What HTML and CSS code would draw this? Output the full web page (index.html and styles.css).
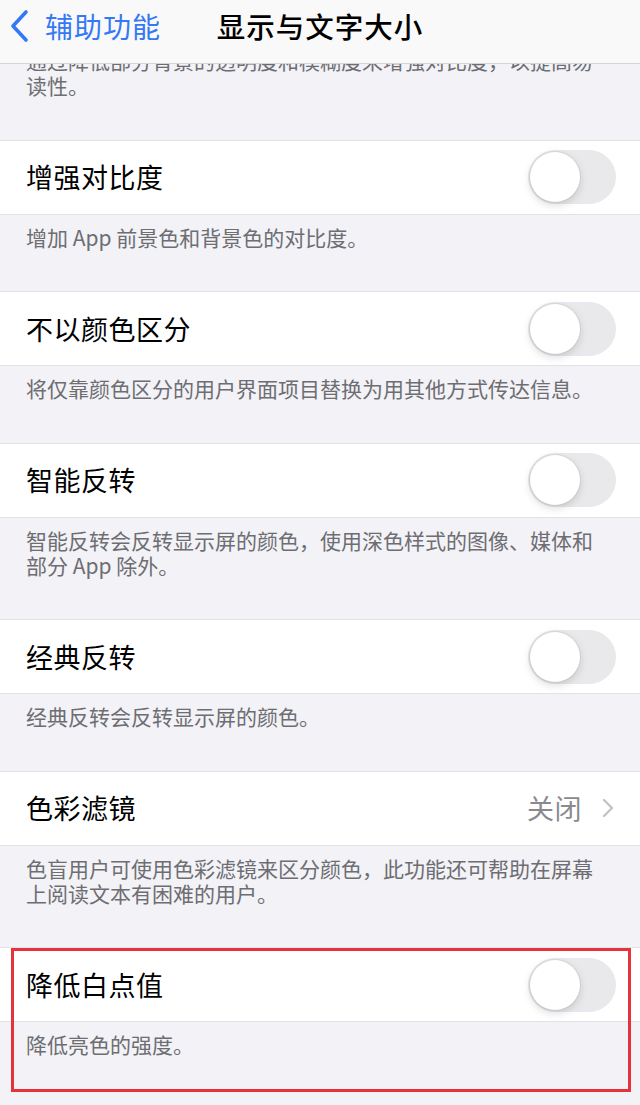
FILE: index.html
```html
<!DOCTYPE html>
<html lang="zh-CN">
<head>
<meta charset="utf-8">
<title>显示与文字大小</title>
<link rel="stylesheet" href="styles.css">
</head>
<body>
<header class="nav">
  <div class="back">
    <svg class="back-chev" width="20" height="34" viewBox="0 0 20 34"><path d="M16 3 L3 17 L16 31" fill="none" stroke="#3478f6" stroke-width="3.6" stroke-linecap="round" stroke-linejoin="round"/></svg>
    <span class="back-text">辅助功能</span>
  </div>
  <div class="nav-title">显示与文字大小</div>
</header>
<main class="content">
  <p class="foot">通过降低部分背景的透明度和模糊度来增强对比度，以提高易读性。</p>

  <div class="row"><span class="label">增强对比度</span><span class="toggle"><span class="knob"></span></span></div>
  <p class="foot">增加 App 前景色和背景色的对比度。</p>

  <div class="row"><span class="label">不以颜色区分</span><span class="toggle"><span class="knob"></span></span></div>
  <p class="foot">将仅靠颜色区分的用户界面项目替换为用其他方式传达信息。</p>

  <div class="row"><span class="label">智能反转</span><span class="toggle"><span class="knob"></span></span></div>
  <p class="foot">智能反转会反转显示屏的颜色，使用深色样式的图像、媒体和部分 App 除外。</p>

  <div class="row"><span class="label">经典反转</span><span class="toggle"><span class="knob"></span></span></div>
  <p class="foot">经典反转会反转显示屏的颜色。</p>

  <div class="row row-link"><span class="label">色彩滤镜</span><span class="value">关闭</span><svg class="chev" width="12" height="20" viewBox="0 0 12 20"><path d="M2 2 L10 10 L2 18" fill="none" stroke="#c4c4c7" stroke-width="2.4" stroke-linecap="round" stroke-linejoin="round"/></svg></div>
  <p class="foot">色盲用户可使用色彩滤镜来区分颜色，此功能还可帮助在屏幕上阅读文本有困难的用户。</p>

  <section class="highlight">
    <div class="row"><span class="label">降低白点值</span><span class="toggle"><span class="knob"></span></span></div>
    <p class="foot">降低亮色的强度。</p>
  </section>
</main>
</body>
</html>
```

FILE: styles.css
```css
html, body {
  margin: 0;
  padding: 0;
}
body {
  width: 640px;
  height: 1105px;
  overflow: hidden;
  background: #f2f2f7;
  font-family: "Noto Sans CJK SC", "Noto Sans", sans-serif;
  position: relative;
}
.nav {
  position: absolute;
  top: 0;
  left: 0;
  right: 0;
  height: 63px;
  background: #f9f9f9;
  border-bottom: 1px solid #d6d6d8;
  z-index: 5;
}
.back {
  position: absolute;
  left: 10px;
  top: 9px;
  display: flex;
  align-items: center;
  gap: 15px;
  height: 34px;
}
.back-chev {
  display: block;
}
.back-text {
  color: #3478f6;
  font-size: 28px;
  letter-spacing: 1px;
  line-height: 34px;
}
.nav-title {
  text-align: center;
  font-size: 28.5px;
  letter-spacing: 1px;
  font-weight: 500;
  color: #000;
  line-height: 34px;
  padding-top: 9px;
}
.content {
  padding-top: 38px;
}
.foot {
  margin: 0;
  padding: 10px 40px 41.5px 26px;
  font-size: 21px;
  line-height: 25px;
  color: #6d6d72;
}
.row {
  display: flex;
  align-items: center;
  height: 73px;
  background: #fff;
  border-top: 1px solid #e2e2e6;
  border-bottom: 1px solid #e2e2e6;
  padding: 0 24px 0 26px;
}
.label {
  flex: 1;
  font-size: 27px;
  letter-spacing: 0.5px;
  color: #000;
  line-height: 34px;
}
.toggle {
  position: relative;
  width: 88px;
  height: 54px;
  border-radius: 27px;
  background: #e9e9eb;
  flex: none;
}
.knob {
  position: absolute;
  left: 2px;
  top: 2px;
  width: 50px;
  height: 50px;
  border-radius: 50%;
  background: #fff;
  box-shadow: 0 3px 8px rgba(0, 0, 0, 0.15), 0 0 0 1px rgba(0, 0, 0, 0.05);
}
.row-link {
  padding-right: 26px;
}
.value {
  font-size: 27px;
  color: #8a8a8e;
  letter-spacing: 0.5px;
  line-height: 34px;
  margin-right: 20px;
}
.chev {
  display: block;
}
.highlight {
  position: relative;
}
.highlight::after {
  content: "";
  position: absolute;
  left: 11px;
  right: 9px;
  top: 1px;
  height: 144px;
  border: 3px solid #e5333b;
  box-sizing: border-box;
  pointer-events: none;
}
```
